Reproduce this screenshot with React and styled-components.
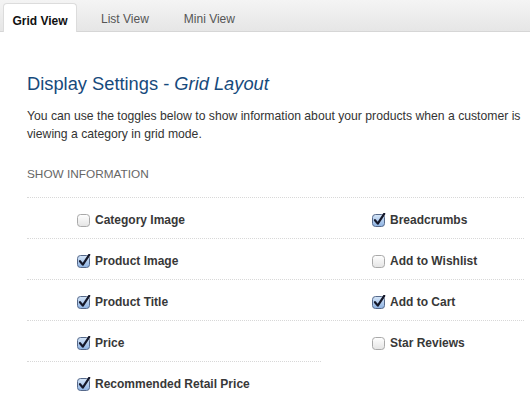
import React from 'react';
import styled, { createGlobalStyle } from 'styled-components';

const GlobalStyle = createGlobalStyle`
  body {
    margin: 0;
    background: #fff;
    font-family: "Liberation Sans", Arial, sans-serif;
  }
`;

const TabBar = styled.div`
  display: flex;
  align-items: flex-end;
  height: 31px;
  padding-left: 3px;
  gap: 13px;
  background: linear-gradient(#f4f4f4, #e6e6e6);
  border-bottom: 1px solid #d6d6d6;
`;

const Tab = styled.div`
  box-sizing: border-box;
  height: ${p => (p.active ? '29px' : '28px')};
  margin-bottom: ${p => (p.active ? '-1px' : '0')};
  padding: ${p => (p.active ? '5px 0 0' : '2px 10px 0')};
  width: ${p => (p.active ? '74px' : 'auto')};
  display: flex;
  align-items: center;
  justify-content: center;
  font-size: 12px;
  font-weight: ${p => (p.active ? 'bold' : 'normal')};
  color: ${p => (p.active ? '#111' : '#555')};
  background: ${p => (p.active ? '#fff' : 'transparent')};
  border: 1px solid ${p => (p.active ? '#dcdcdc' : 'transparent')};
  border-bottom: none;
  border-radius: 4px 4px 0 0;
`;

const Content = styled.div`
  padding: 41px 6px 0 27px;
`;

const Title = styled.h2`
  margin: 0;
  font-size: 18.3px;
  font-weight: normal;
  color: #164a7c;
  line-height: 22px;
  em {
    font-style: italic;
  }
`;

const Intro = styled.p`
  margin: 12px 0 0;
  font-size: 12.2px;
  line-height: 18px;
  color: #333;
`;

const SectionLabel = styled.div`
  margin-top: 23px;
  font-size: 11.8px;
  line-height: 16px;
  color: #666;
  text-transform: uppercase;
`;

const Columns = styled.div`
  display: grid;
  grid-template-columns: 294px 1fr;
  margin-top: 17px;
`;

const Column = styled.div`
  display: flex;
  flex-direction: column;
`;

const Item = styled.label`
  display: flex;
  align-items: center;
  gap: 4px;
  height: 40px;
  padding-left: ${p => p.indent}px;
  padding-top: 2px;
  box-sizing: content-box;
  border-top: 1px dotted #d8d8d8;
  font-size: 12px;
  font-weight: bold;
  color: #383838;
  margin-top: -2px;
`;

const Box = ({ checked }) => (
  <svg width="14" height="14" viewBox="0 0 14 14">
    <defs>
      <linearGradient id="on" x1="0" y1="0" x2="0" y2="1">
        <stop offset="0" stopColor="#d6e6f8" />
        <stop offset="1" stopColor="#8db2e2" />
      </linearGradient>
      <linearGradient id="off" x1="0" y1="0" x2="0" y2="1">
        <stop offset="0" stopColor="#ffffff" />
        <stop offset="1" stopColor="#e4e4e4" />
      </linearGradient>
    </defs>
    <rect
      x="0.5"
      y="1.5"
      width="12"
      height="12"
      rx="3"
      fill={checked ? 'url(#on)' : 'url(#off)'}
      stroke={checked ? '#56698a' : '#a9a9a9'}
    />
    {checked && (
      <path
        d="M3 7.2 L5.8 10.6 L12.2 0.8"
        fill="none"
        stroke="#15182a"
        strokeWidth="2.2"
        strokeLinecap="round"
        strokeLinejoin="round"
      />
    )}
  </svg>
);

const Row = ({ label, checked, indent }) => (
  <Item indent={indent}>
    <Box checked={checked} />
    {label}
  </Item>
);

const left = [
  ['Category Image', false],
  ['Product Image', true],
  ['Product Title', true],
  ['Price', true],
  ['Recommended Retail Price', true],
];

const right = [
  ['Breadcrumbs', true],
  ['Add to Wishlist', false],
  ['Add to Cart', true],
  ['Star Reviews', false],
];

export default function App() {
  return (
    <>
      <GlobalStyle />
      <TabBar>
        <Tab active>Grid View</Tab>
        <Tab>List View</Tab>
        <Tab>Mini View</Tab>
      </TabBar>
      <Content>
        <Title>
          Display Settings - <em>Grid Layout</em>
        </Title>
        <Intro>
          You can use the toggles below to show information about your products when a customer is
          viewing a category in grid mode.
        </Intro>
        <SectionLabel>Show Information</SectionLabel>
        <Columns>
          <Column>
            {left.map(([l, c]) => (
              <Row key={l} label={l} checked={c} indent={50} />
            ))}
          </Column>
          <Column>
            {right.map(([l, c]) => (
              <Row key={l} label={l} checked={c} indent={51} />
            ))}
          </Column>
        </Columns>
      </Content>
    </>
  );
}
